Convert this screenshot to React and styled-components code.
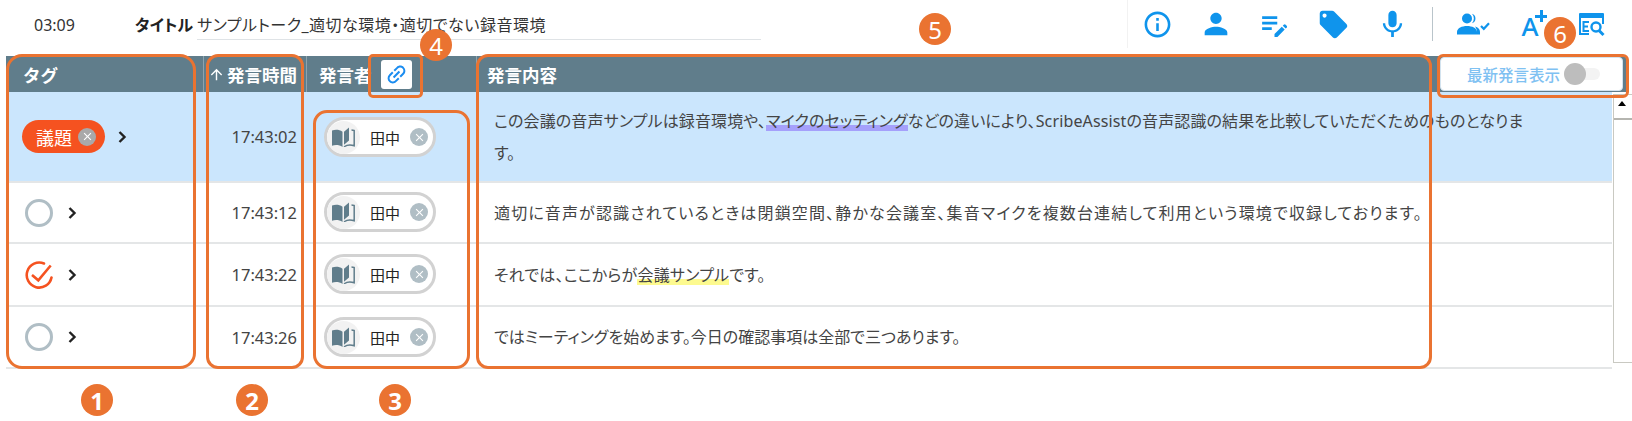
import React from 'react'
import styled, { createGlobalStyle } from 'styled-components'
import {
  MdInfoOutline,
  MdPerson,
  MdEditNote,
  MdLocalOffer,
  MdMic,
  MdClose,
  MdLink,
  MdArrowUpward,
} from 'react-icons/md'

const GlobalStyle = createGlobalStyle`
  html, body {
    margin: 0;
    background: #fff;
    font-family: "Noto Sans", "Noto Sans CJK JP", sans-serif;
    color: #333;
  }
`

const Page = styled.div`
  position: relative;
  width: 1632px;
  height: 421px;
  overflow: hidden;
`

const TopBar = styled.div`
  display: flex;
  align-items: flex-start;
  height: 56px;
`

const Time = styled.div`
  width: 135px;
  padding: 13px 0 0 34px;
  box-sizing: border-box;
  font-size: 16px;
  line-height: 24px;
`

const TitleLabel = styled.div`
  width: 62px;
  padding-top: 13px;
  font-size: 16px;
  line-height: 24px;
  font-weight: 700;
  color: #222;
  font-feature-settings: 'palt';
`

const TitleField = styled.div`
  width: 564px;
  height: 26px;
  padding-top: 13px;
  font-size: 16px;
  line-height: 24px;
  letter-spacing: 0.5px;
  border-bottom: 1px solid #dfe3e6;
  font-feature-settings: 'palt';
`

const IconBar = styled.div`
  display: flex;
  align-items: center;
  height: 48px;
  margin-left: 366px;
  border-left: 1px solid #f2f2f2;
  color: #0f94ec;
`

const IconSlot = styled.div`
  display: flex;
  align-items: center;
  justify-content: center;
  width: ${(p) => p.$w || 58.7}px;
  font-size: ${(p) => p.$size || 30}px;
`

const VDivider = styled.div`
  width: 1px;
  height: 34px;
  margin: 0 11px 0 11px;
  background: #b9c4ca;
`

const PlusA = styled.div`
  position: relative;
  width: 26px;
  font-family: "Noto Sans", sans-serif;
  font-size: 26px;
  line-height: 26px;
  font-weight: 500;
  margin-top: 4px;
  &::before,
  &::after {
    content: '';
    position: absolute;
    background: currentColor;
  }
  &::before {
    left: 14px;
    top: 2px;
    width: 12px;
    height: 3px;
  }
  &::after {
    left: 18.500px;
    top: -3px;
    width: 3px;
    height: 12px;
  }
`

const Table = styled.div`
  margin-left: 6px;
  width: 1621px;
`

const HeaderRow = styled.div`
  display: grid;
  grid-template-columns: 198px 103px 170px 1fr;
  height: 36px;
  background: #607d8b;
  color: #fff;
  font-size: 17.500px;
  font-weight: 700;
`

const HeaderCell = styled.div`
  display: flex;
  align-items: center;
  padding-left: ${(p) => p.$pad ?? 17}px;
  border-right: ${(p) => (p.$last ? 'none' : '1px solid #8ea3ad')};
  white-space: nowrap;
`

const SortArrow = styled(MdArrowUpward)`
  flex: none;
  width: 17px;
  height: 17px;
  margin-right: 2px;
`

const LinkButton = styled.div`
  display: flex;
  align-items: center;
  justify-content: center;
  width: 31px;
  height: 29px;
  margin-left: 9px;
  background: #fff;
  border-radius: 3px;
  color: #1a8cf0;
  font-size: 25px;
  svg {
    transform: rotate(-45deg);
  }
`

const Row = styled.div`
  display: grid;
  grid-template-columns: 198px 103px 170px 1fr;
  width: 1606px;
  height: ${(p) => p.$h}px;
  box-sizing: border-box;
  background: ${(p) => (p.$active ? '#cbe6fd' : '#fff')};
  border-bottom: 2px solid #e4e6e7;
`

const TagCell = styled.div`
  display: flex;
  align-items: center;
  padding-left: ${(p) => p.$pad}px;
`

const TagPill = styled.div`
  display: flex;
  align-items: center;
  height: 33px;
  width: 83px;
  padding-left: 14px;
  box-sizing: border-box;
  border-radius: 17px;
  background: #f55220;
  color: #fff;
  font-size: 18px;
`

const PillClose = styled.span`
  display: flex;
  align-items: center;
  justify-content: center;
  flex: none;
  width: 18px;
  height: 18px;
  margin-left: ${(p) => p.$gap}px;
  border-radius: 50%;
  background: ${(p) => p.$bg};
  color: #fff;
  font-size: 13px;
`

const ChevronIcon = styled.svg`
  flex: none;
  width: 10px;
  height: 14px;
  margin-left: ${(p) => p.$gap}px;
  fill: none;
  stroke: #222;
  stroke-width: 2.400;
`

const Circle = styled.span`
  flex: none;
  width: 28px;
  height: 28px;
  box-sizing: border-box;
  border: 3px solid #b0bec5;
  border-radius: 50%;
`

const TimeCell = styled.div`
  display: flex;
  align-items: center;
  justify-content: flex-end;
  padding-right: 10px;
  font-size: 16.500px;
  color: #444;
`

const SpeakerCell = styled.div`
  display: flex;
  padding: ${(p) => p.$top}px 0 0 17px;
`

const SpeakerChip = styled.div`
  display: flex;
  align-items: center;
  width: 112px;
  height: 40px;
  box-sizing: border-box;
  border: 3px solid #d2d2d2;
  border-radius: 20px;
  background: #fff;
  color: #222;
`

const BookIcon = styled.span`
  display: flex;
  align-items: center;
  justify-content: center;
  flex: none;
  width: 33px;
  height: 33px;
  border-radius: 50%;
  background: #f2f2f2;
  color: #607d8b;
`

const SpeakerName = styled.span`
  margin: 0 10px;
  font-size: 15px;
  white-space: nowrap;
`

const Speech = styled.div`
  padding: ${(p) => p.$top}px 72px 0 17px;
  font-size: 16px;
  line-height: 32px;
  letter-spacing: ${(p) => p.$ls}px;
  color: #444;
  font-feature-settings: 'palt';
`

const Mark = styled.span`
  background: linear-gradient(transparent 70%, ${(p) => p.$color} 70%, ${(p) => p.$color} 94%, transparent 94%);
`

const LatestBox = styled.div`
  position: absolute;
  left: 1440px;
  top: 57px;
  display: flex;
  align-items: center;
  justify-content: flex-end;
  width: 183px;
  height: 34px;
  padding-right: 22px;
  box-sizing: border-box;
  background: #fff;
  border: 1px solid #d3e3ef;
  border-radius: 4px;
  color: #7fc1f2;
  font-size: 15.500px;
  font-weight: 500;
`

const Toggle = styled.span`
  position: relative;
  width: 36px;
  height: 12px;
  margin-left: 4px;
  border-radius: 6px;
  background: #f3f3f3;
  &::before {
    content: '';
    position: absolute;
    left: 0;
    top: -5px;
    width: 22px;
    height: 22px;
    border-radius: 50%;
    background: #bdbdbd;
  }
`

const ScrollTrack = styled.div`
  position: absolute;
  left: 1613px;
  top: 94px;
  width: 19px;
  height: 269px;
  box-sizing: border-box;
  border: 1px solid #c9c9c2;
  border-right: none;
  background: #fff;
`

const ScrollUp = styled.div`
  height: 17px;
  border-bottom: 2px solid #b5b5b0;
  &::before {
    content: '';
    display: block;
    width: 0;
    margin: 6px 0 0 4px;
    border: 4px solid transparent;
    border-top: none;
    border-bottom: 5px solid #000;
  }
`

const Callout = styled.div`
  position: absolute;
  left: ${(p) => p.$x}px;
  top: ${(p) => p.$y}px;
  width: ${(p) => p.$w}px;
  height: ${(p) => p.$h}px;
  box-sizing: border-box;
  border: 3px solid #ea7331;
  border-radius: ${(p) => p.$r || 12}px;
`

const Badge = styled.div`
  position: absolute;
  left: ${(p) => p.$x - 16}px;
  top: ${(p) => p.$y - 16}px;
  display: flex;
  align-items: center;
  justify-content: center;
  width: 32px;
  height: 32px;
  border-radius: 50%;
  background: #ea7331;
  color: #fff;
  font-size: 24px;
  font-weight: ${(p) => (p.$thin ? 400 : 700)};
`

const Chevron = ({ gap }) => (
  <ChevronIcon $gap={gap} viewBox="0 0 10 14">
    <path d="M2.500 2l5 5-5 5" />
  </ChevronIcon>
)

const PeopleCheck = () => (
  <svg width="33" height="22" viewBox="0 0 33 22" fill="currentColor">
    <circle cx="10" cy="5.500" r="5" />
    <path d="M0 19c0-4 5-6 10-6s10 2 10 6v2.500H0z" />
    <path d="M15 .8a5 5 0 0 1 0 9.500 7 7 0 0 0 0-9.500zM18 13.500c3 .8 5 2.700 5 5.500v2.500h-3V19c0-2-.8-3.700-2-5.500z" />
    <path d="M24 13l2.800 2.800 5.200-5.600" fill="none" stroke="currentColor" strokeWidth="2.200" />
  </svg>
)

const FindPanel = () => (
  <svg width="27" height="25" viewBox="0 0 27 25" fill="none" stroke="currentColor">
    <path d="M2 1h23a1 1 0 0 1 1 1v4H1V2a1 1 0 0 1 1-1z" fill="currentColor" strokeWidth="0" />
    <path d="M2 5v17h9M25 5v7" strokeWidth="2" />
    <path d="M11 10H5.500v9H11M5.500 14.500H10" strokeWidth="2" />
    <circle cx="18" cy="15" r="4.500" strokeWidth="2.400" />
    <path d="M21 18.500l4.500 4.500" strokeWidth="3" />
  </svg>
)

const CheckedCircle = () => (
  <svg width="28" height="28" viewBox="0 0 28 28" fill="none" stroke="#f55220" strokeWidth="2.600" style={{ flex: 'none' }}>
    <path d="M26.500 16.500a12.500 12.500 0 1 1-7.500-14" strokeLinecap="round" />
    <path d="M7 14l6.300 5.300L25.700 4.500" />
  </svg>
)

const OpenBook = () => (
  <svg width="23" height="20" viewBox="0 0 23 20" fill="currentColor">
    <path d="M0 3.500c3.300-1.300 7.500-1 10.500 1.200V20c-3-2.100-7.200-2.400-10.500-1.200z" />
    <path d="M12 4.700L17 .5v13l-5 4.200z" />
    <path d="M19.500 3c1 .1 1.900.3 2.700.5v15.200c-3.200-1.100-7.500-.8-10.200 1.100" fill="none" stroke="currentColor" strokeWidth="1.500" />
  </svg>
)

const rows = [
  { h: 91, top: 25, speechTop: 13, ls: 0.13, time: '17:43:02', active: true },
  { h: 61, top: 9, speechTop: 14, ls: 1.15, time: '17:43:12' },
  { h: 63, top: 10, speechTop: 15, ls: 0.2, time: '17:43:22', checked: true },
  { h: 62, top: 10, speechTop: 14, ls: 0, time: '17:43:26' },
]

const speeches = [
  <>
    この会議の音声サンプルは録音環境や、<Mark $color="#a5a0fb">マイクのセッティング</Mark>などの違いにより、ScribeAssistの音声認識の結果を比較していただくためのものとなります。
  </>,
  '適切に音声が認識されているときは閉鎖空間、静かな会議室、集音マイクを複数台連結して利用という環境で収録しております。',
  <>
    それでは、ここからが<Mark $color="#fdfa8f">会議サンプル</Mark>です。
  </>,
  'ではミーティングを始めます。今日の確認事項は全部で三つあります。',
]

const callouts = [
  { x: 6, y: 54, w: 190, h: 315, r: 16 },
  { x: 206, y: 54, w: 98, h: 315 },
  { x: 313, y: 110, w: 157, h: 259, r: 14 },
  { x: 368, y: 54, w: 55, h: 44, r: 5 },
  { x: 476, y: 54, w: 956, h: 315, r: 12 },
  { x: 1437, y: 54, w: 192, h: 44, r: 6 },
]

const badges = [
  { n: 1, x: 97, y: 400 },
  { n: 2, x: 252, y: 400 },
  { n: 3, x: 395, y: 400 },
  { n: 4, x: 436, y: 45, thin: true },
  { n: 5, x: 935, y: 29, thin: true },
  { n: 6, x: 1560, y: 33, thin: true },
]

export default function App() {
  return (
    <Page>
      <GlobalStyle />
      <TopBar>
        <Time>03:09</Time>
        <TitleLabel>タイトル</TitleLabel>
        <TitleField>サンプルトーク_適切な環境・適切でない録音環境</TitleField>
        <IconBar>
          <IconSlot $size={31}><MdInfoOutline /></IconSlot>
          <IconSlot $size={34}><MdPerson /></IconSlot>
          <IconSlot $size={33}><MdEditNote /></IconSlot>
          <IconSlot $size={33}><MdLocalOffer /></IconSlot>
          <IconSlot $size={33}><MdMic /></IconSlot>
          <VDivider />
          <IconSlot $w={58}><PeopleCheck /></IconSlot>
          <IconSlot $w={64}><PlusA>A</PlusA></IconSlot>
          <IconSlot $w={50}><FindPanel /></IconSlot>
        </IconBar>
      </TopBar>

      <Table>
        <HeaderRow>
          <HeaderCell>タグ</HeaderCell>
          <HeaderCell $pad={4}>
            <SortArrow />発言時間
          </HeaderCell>
          <HeaderCell $pad={12}>
            発言者
            <LinkButton><MdLink /></LinkButton>
          </HeaderCell>
          <HeaderCell $pad={10} $last>発言内容</HeaderCell>
        </HeaderRow>

        {rows.map((r, i) => (
          <Row key={r.time} $h={r.h} $active={r.active}>
            {r.active ? (
              <TagCell $pad={16}>
                <TagPill>
                  議題
                  <PillClose $gap={6} $bg="#a9a9a9"><MdClose /></PillClose>
                </TagPill>
                <Chevron gap={12} />
              </TagCell>
            ) : (
              <TagCell $pad={19}>
                {r.checked ? <CheckedCircle /> : <Circle />}
                <Chevron gap={14} />
              </TagCell>
            )}
            <TimeCell>{r.time}</TimeCell>
            <SpeakerCell $top={r.top}>
              <SpeakerChip>
                <BookIcon><OpenBook /></BookIcon>
                <SpeakerName>田中</SpeakerName>
                <PillClose $gap={0} $bg="#b0bec5"><MdClose /></PillClose>
              </SpeakerChip>
            </SpeakerCell>
            <Speech $top={r.speechTop} $ls={r.ls}>{speeches[i]}</Speech>
          </Row>
        ))}
      </Table>

      <LatestBox>
        最新発言表示
        <Toggle />
      </LatestBox>
      <ScrollTrack><ScrollUp /></ScrollTrack>

      {callouts.map((c) => (
        <Callout key={c.x} $x={c.x} $y={c.y} $w={c.w} $h={c.h} $r={c.r} />
      ))}
      {badges.map((b) => (
        <Badge key={b.n} $x={b.x} $y={b.y} $thin={b.thin}>{b.n}</Badge>
      ))}
    </Page>
  )
}
